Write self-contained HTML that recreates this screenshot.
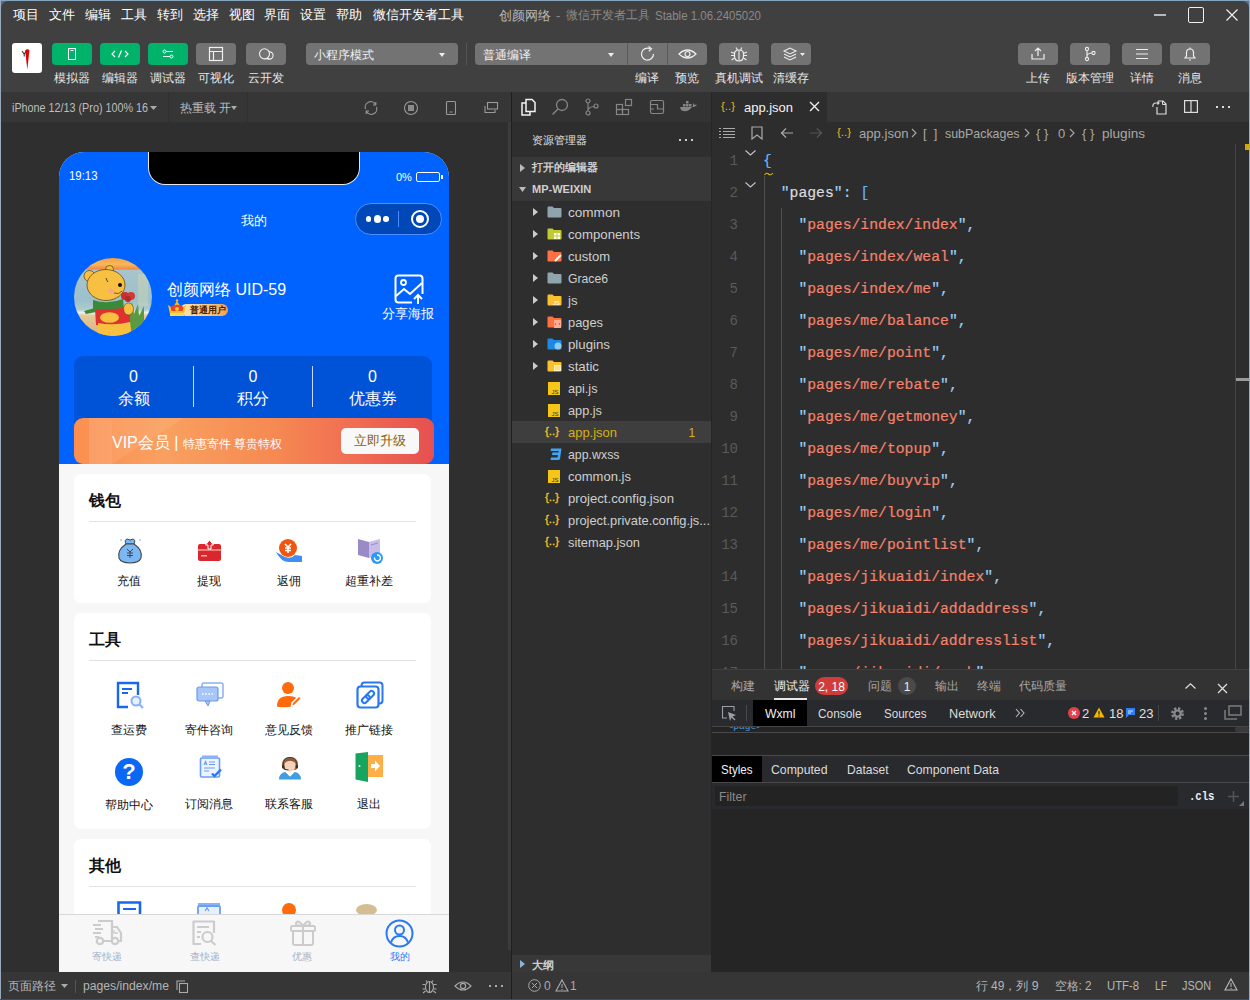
<!DOCTYPE html>
<html><head><meta charset="utf-8">
<style>
*{box-sizing:border-box;margin:0;padding:0}
html,body{width:1250px;height:1000px;overflow:hidden;background:#4d7399}
body{font-family:"Liberation Sans",sans-serif;position:relative}
.a{position:absolute}
.t{position:absolute;white-space:nowrap;line-height:1}
.m{font-family:"Liberation Mono",monospace}
svg{overflow:visible}
</style></head><body>

<div class="a" style="left:1px;top:1px;width:1248px;height:998px;background:#404040;border-radius:7px"></div>
<div class="a" style="left:0px;top:0px;width:1250px;height:1px;background:#86a6c0;"></div>
<div class="a" style="left:0px;top:0px;width:1px;height:1000px;background:#9aaabb;"></div>
<div class="a" style="left:0px;top:999px;width:1250px;height:1px;background:#2b4f8a;"></div>
<div class="t" style="left:13px;top:8.3px;font-size:13px;color:#ffffff;font-weight:normal;">项目</div>
<div class="t" style="left:49px;top:8.3px;font-size:13px;color:#ffffff;font-weight:normal;">文件</div>
<div class="t" style="left:85px;top:8.3px;font-size:13px;color:#ffffff;font-weight:normal;">编辑</div>
<div class="t" style="left:121px;top:8.3px;font-size:13px;color:#ffffff;font-weight:normal;">工具</div>
<div class="t" style="left:157px;top:8.3px;font-size:13px;color:#ffffff;font-weight:normal;">转到</div>
<div class="t" style="left:193px;top:8.3px;font-size:13px;color:#ffffff;font-weight:normal;">选择</div>
<div class="t" style="left:229px;top:8.3px;font-size:13px;color:#ffffff;font-weight:normal;">视图</div>
<div class="t" style="left:264px;top:8.3px;font-size:13px;color:#ffffff;font-weight:normal;">界面</div>
<div class="t" style="left:300px;top:8.3px;font-size:13px;color:#ffffff;font-weight:normal;">设置</div>
<div class="t" style="left:336px;top:8.3px;font-size:13px;color:#ffffff;font-weight:normal;">帮助</div>
<div class="t" style="left:373px;top:8.3px;font-size:13px;color:#ffffff;font-weight:normal;">微信开发者工具</div>
<div class="t" style="left:499px;top:9.0px;font-size:13px;color:#b8b8b8;font-weight:normal;">创颜网络</div>
<div class="t" style="left:556px;top:9.0px;font-size:13px;color:#8a8a8a;font-weight:normal;">-</div>
<div class="t" style="left:566px;top:9.3px;font-size:12.3px;color:#8a8a8a;font-weight:normal;">微信开发者工具</div>
<div class="t" id="tw0" style="left:654.5px;top:9.0px;font-size:13px;color:#8a8a8a;font-weight:normal;transform:scaleX(0.8833);transform-origin:0 50%;">Stable 1.06.2405020</div>
<div class="a" style="left:1154px;top:14px;width:12px;height:2px;background:#b8b8b8;"></div>
<div class="a" style="left:1188px;top:7px;width:16px;height:16px;background:transparent;border:1.5px solid #f0f0f0;border-radius:2px"></div>
<svg class="a" style="left:1226px;top:9px;" width="12" height="12" viewBox="0 0 12 12"><path d="M0.5 0.5L11.5 11.5M11.5 0.5L0.5 11.5" stroke="#f0f0f0" stroke-width="1.2"/></svg>
<div class="a" style="left:12px;top:43px;width:30px;height:30px;background:#fff;border-radius:3px"></div>
<svg class="a" style="left:12px;top:43px;" width="30" height="30" viewBox="0 0 30 30"><path d="M13.2 7.5 Q15 5.5 17.4 7 L16.5 16 L15.3 26.5 L14.2 17 Z" fill="#e00000"/><path d="M10 8 L12.2 11 L14 8.5 M12.2 11 V13.5" stroke="#333" stroke-width="1.1" fill="none"/></svg>
<div class="a" style="left:52px;top:43px;width:40px;height:22px;background:#00b26a;border-radius:4px"></div>
<svg class="a" style="left:52px;top:43px;" width="40" height="22" viewBox="0 0 40 22"><rect x="16.5" y="5.5" width="7" height="11" fill="none" stroke="#fff" stroke-width="1"/><rect x="18.5" y="7" width="3" height="1" fill="#fff"/></svg>
<div class="t" style="left:-78px;width:300px;text-align:center;top:71.5px;font-size:12px;color:#e6e6e6;font-weight:normal;">模拟器</div>
<div class="a" style="left:100px;top:43px;width:40px;height:22px;background:#00b26a;border-radius:4px"></div>
<svg class="a" style="left:100px;top:43px;" width="40" height="22" viewBox="0 0 40 22"><path d="M15 8 L12 11 L15 14 M25 8 L28 11 L25 14 M21.5 7.5 L18.5 14.5" stroke="#fff" stroke-width="1.2" fill="none"/></svg>
<div class="t" style="left:-30px;width:300px;text-align:center;top:71.5px;font-size:12px;color:#e6e6e6;font-weight:normal;">编辑器</div>
<div class="a" style="left:148px;top:43px;width:40px;height:22px;background:#00b26a;border-radius:4px"></div>
<svg class="a" style="left:148px;top:43px;" width="40" height="22" viewBox="0 0 40 22"><circle cx="16.5" cy="8.5" r="1.5" fill="none" stroke="#fff" stroke-width="1"/><circle cx="23.5" cy="13.5" r="1.5" fill="none" stroke="#fff" stroke-width="1"/><path d="M18 8.5H25M15 13.5H22" stroke="#fff" stroke-width="1"/></svg>
<div class="t" style="left:18px;width:300px;text-align:center;top:71.5px;font-size:12px;color:#e6e6e6;font-weight:normal;">调试器</div>
<div class="a" style="left:196px;top:43px;width:40px;height:22px;background:#737373;border-radius:4px"></div>
<svg class="a" style="left:196px;top:43px;" width="40" height="22" viewBox="0 0 40 22"><rect x="13.5" y="4.5" width="13" height="13" fill="none" stroke="#f0f0f0" stroke-width="1.2"/><path d="M13.5 8.5H26.5M17.5 8.5V17.5" stroke="#f0f0f0" stroke-width="1.2"/></svg>
<div class="t" style="left:66px;width:300px;text-align:center;top:71.5px;font-size:12px;color:#e6e6e6;font-weight:normal;">可视化</div>
<div class="a" style="left:246px;top:43px;width:40px;height:22px;background:#737373;border-radius:4px"></div>
<svg class="a" style="left:246px;top:43px;" width="40" height="22" viewBox="0 0 40 22"><circle cx="23.5" cy="12.5" r="3.6" fill="none" stroke="#f0f0f0" stroke-width="1.1"/><path d="M17.5 15.8 H23.5" stroke="#f0f0f0" stroke-width="1.1"/><circle cx="18.5" cy="10.8" r="5" fill="#737373" stroke="#f0f0f0" stroke-width="1.1"/></svg>
<div class="t" style="left:116px;width:300px;text-align:center;top:71.5px;font-size:12px;color:#e6e6e6;font-weight:normal;">云开发</div>
<div class="a" style="left:306px;top:43px;width:152px;height:22px;background:#737373;border-radius:4px"></div>
<div class="t" style="left:314px;top:49.4px;font-size:12.2px;color:#f0f0f0;font-weight:normal;">小程序模式</div>
<svg class="a" style="left:439px;top:53px;" width="6" height="4" viewBox="0 0 6 4"><path d="M0 0H6L3 4Z" fill="#eee"/></svg>
<div class="a" style="left:466px;top:43px;width:1px;height:22px;background:#555;"></div>
<div class="a" style="left:475px;top:43px;width:232px;height:22px;background:#737373;border-radius:4px"></div>
<div class="a" style="left:627px;top:43px;width:1px;height:22px;background:#5a5a5a;"></div>
<div class="a" style="left:667px;top:43px;width:1px;height:22px;background:#5a5a5a;"></div>
<div class="t" style="left:483px;top:49.4px;font-size:12.2px;color:#f0f0f0;font-weight:normal;">普通编译</div>
<svg class="a" style="left:608px;top:53px;" width="6" height="4" viewBox="0 0 6 4"><path d="M0 0H6L3 4Z" fill="#eee"/></svg>
<svg class="a" style="left:628px;top:43px;" width="40" height="22" viewBox="0 0 40 22"><path d="M25.5 11 A6 6 0 1 1 22 5.6" fill="none" stroke="#eee" stroke-width="1.2"/><path d="M20.5 3.5 L23.5 5.8 L20.8 8.2" fill="none" stroke="#eee" stroke-width="1.2"/></svg>
<svg class="a" style="left:668px;top:43px;" width="39" height="22" viewBox="0 0 39 22"><path d="M11 11 Q19.5 3 28 11 Q19.5 19 11 11Z" fill="none" stroke="#eee" stroke-width="1.2"/><circle cx="19.5" cy="11" r="2.5" fill="none" stroke="#eee" stroke-width="1.2"/></svg>
<div class="t" style="left:497px;width:300px;text-align:center;top:71.5px;font-size:12px;color:#e6e6e6;font-weight:normal;">编译</div>
<div class="t" style="left:537px;width:300px;text-align:center;top:71.5px;font-size:12px;color:#e6e6e6;font-weight:normal;">预览</div>
<div class="a" style="left:719px;top:43px;width:40px;height:22px;background:#737373;border-radius:4px"></div>
<svg class="a" style="left:719px;top:43px;" width="40" height="22" viewBox="0 0 40 22"><path d="M15.5 11 Q15.5 7 20 7 Q24.5 7 24.5 11 V13 Q24.5 18 20 18 Q15.5 18 15.5 13Z" fill="none" stroke="#eee" stroke-width="1.2"/><path d="M20 7.5V17.5M17 4.5L18.5 7M23 4.5L21.5 7M12 9L15.5 10.5M28 9L24.5 10.5M12 12.5H15.5M24.5 12.5H28M12.5 17L15.5 15M27.5 17L24.5 15" stroke="#eee" stroke-width="1.1"/></svg>
<div class="t" style="left:589px;width:300px;text-align:center;top:71.5px;font-size:12px;color:#e6e6e6;font-weight:normal;">真机调试</div>
<div class="a" style="left:771px;top:43px;width:40px;height:22px;background:#737373;border-radius:4px"></div>
<svg class="a" style="left:771px;top:43px;" width="40" height="22" viewBox="0 0 40 22"><path d="M13 8 L19 5 L25 8 L19 11Z M13 11 L19 14 L25 11 M13 14 L19 17 L25 14" fill="none" stroke="#eee" stroke-width="1.1"/><path d="M29 10H34L31.5 13Z" fill="#eee"/></svg>
<div class="t" style="left:641px;width:300px;text-align:center;top:71.5px;font-size:12px;color:#e6e6e6;font-weight:normal;">清缓存</div>
<div class="a" style="left:1018px;top:43px;width:40px;height:22px;background:#737373;border-radius:4px"></div>
<svg class="a" style="left:1018px;top:43px;" width="40" height="22" viewBox="0 0 40 22"><path d="M14 11V16H26V11M20 13V5M17 8L20 5L23 8" fill="none" stroke="#eee" stroke-width="1.2"/></svg>
<div class="t" style="left:888px;width:300px;text-align:center;top:71.5px;font-size:12px;color:#e6e6e6;font-weight:normal;">上传</div>
<div class="a" style="left:1070px;top:43px;width:40px;height:22px;background:#737373;border-radius:4px"></div>
<svg class="a" style="left:1070px;top:43px;" width="40" height="22" viewBox="0 0 40 22"><circle cx="17" cy="6" r="1.6" fill="none" stroke="#eee" stroke-width="1.1"/><circle cx="17" cy="16" r="1.6" fill="none" stroke="#eee" stroke-width="1.1"/><circle cx="23.5" cy="10" r="1.6" fill="none" stroke="#eee" stroke-width="1.1"/><path d="M17 7.6V14.4M17 13 Q17 10.5 22 10" fill="none" stroke="#eee" stroke-width="1.1"/></svg>
<div class="t" style="left:940px;width:300px;text-align:center;top:71.5px;font-size:12px;color:#e6e6e6;font-weight:normal;">版本管理</div>
<div class="a" style="left:1122px;top:43px;width:40px;height:22px;background:#737373;border-radius:4px"></div>
<svg class="a" style="left:1122px;top:43px;" width="40" height="22" viewBox="0 0 40 22"><path d="M14 6.5H26M14 11H26M14 15.5H26" stroke="#eee" stroke-width="1.2"/></svg>
<div class="t" style="left:992px;width:300px;text-align:center;top:71.5px;font-size:12px;color:#e6e6e6;font-weight:normal;">详情</div>
<div class="a" style="left:1170px;top:43px;width:40px;height:22px;background:#737373;border-radius:4px"></div>
<svg class="a" style="left:1170px;top:43px;" width="40" height="22" viewBox="0 0 40 22"><path d="M15 15H25 L23.5 13V9.5A3.5 3.5 0 0 0 16.5 9.5V13Z M19 17H21" fill="none" stroke="#eee" stroke-width="1.2"/><path d="M20 4.5V6" stroke="#eee" stroke-width="1.2"/></svg>
<div class="t" style="left:1040px;width:300px;text-align:center;top:71.5px;font-size:12px;color:#e6e6e6;font-weight:normal;">消息</div>
<div class="a" style="left:1px;top:92px;width:510px;height:30px;background:#363636;"></div>
<div class="a" style="left:1px;top:122px;width:510px;height:850px;background:#2f2f2f;"></div>
<div class="a" style="left:168px;top:92px;width:1px;height:30px;background:#303030;"></div>
<div class="a" style="left:247px;top:92px;width:1px;height:30px;background:#303030;"></div>
<div class="t" id="tw1" style="left:12px;top:101.5px;font-size:12px;color:#bdbdbd;font-weight:normal;transform:scaleX(0.8981);transform-origin:0 50%;">iPhone 12/13 (Pro) 100% 16</div>
<svg class="a" style="left:150px;top:106px;" width="7" height="4" viewBox="0 0 7 4"><path d="M0 0H7L3.5 4Z" fill="#aaa"/></svg>
<div class="t" style="left:180px;top:101.7px;font-size:11.7px;color:#bdbdbd;font-weight:normal;">热重载 开</div>
<svg class="a" style="left:231px;top:106px;" width="6" height="4" viewBox="0 0 6 4"><path d="M0 0H6L3 4Z" fill="#aaa"/></svg>
<svg class="a" style="left:363px;top:100px;" width="16" height="16" viewBox="0 0 16 16"><path d="M2.5 9 A5.5 5.5 0 0 1 12.5 4.5 M13.5 7 A5.5 5.5 0 0 1 3.5 11.5" fill="none" stroke="#9a9a9a" stroke-width="1.1"/><path d="M12.8 2V5H10M3.2 14V11H6" fill="none" stroke="#9a9a9a" stroke-width="1.1"/></svg>
<svg class="a" style="left:403px;top:100px;" width="16" height="16" viewBox="0 0 16 16"><circle cx="8" cy="8" r="6.5" fill="none" stroke="#9a9a9a" stroke-width="1.1"/><rect x="5" y="5" width="6" height="6" fill="#8a8a8a"/></svg>
<svg class="a" style="left:443px;top:100px;" width="16" height="16" viewBox="0 0 16 16"><rect x="3.5" y="1.5" width="9" height="13" rx="1" fill="none" stroke="#9a9a9a" stroke-width="1.1"/><path d="M6.5 12H9.5" stroke="#9a9a9a" stroke-width="1"/></svg>
<svg class="a" style="left:483px;top:100px;" width="16" height="16" viewBox="0 0 16 16"><rect x="4.5" y="2.5" width="10" height="6.5" fill="none" stroke="#9a9a9a" stroke-width="1.1"/><path d="M2 6V12.5H12V10" fill="none" stroke="#9a9a9a" stroke-width="1.1"/></svg>
<div class="a" style="left:508px;top:122px;width:3px;height:828px;background:#3c3c3c;"></div>
<div class="a" style="left:511px;top:92px;width:1px;height:907px;background:#1f1f1f;"></div>
<div class="a" style="left:1px;top:972px;width:510px;height:27px;background:#363636;"></div>
<div class="t" style="left:8px;top:980.0px;font-size:12px;color:#b5b5b5;font-weight:normal;">页面路径</div>
<svg class="a" style="left:61px;top:984px;" width="7" height="4" viewBox="0 0 7 4"><path d="M0 0H7L3.5 4Z" fill="#aaa"/></svg>
<div class="a" style="left:75px;top:980px;width:1px;height:13px;background:#555;"></div>
<div class="t" id="tw2" style="left:83px;top:980.0px;font-size:12px;color:#b5b5b5;font-weight:normal;transform:scaleX(1.0149);transform-origin:0 50%;">pages/index/me</div>
<svg class="a" style="left:176px;top:980px;" width="12" height="13" viewBox="0 0 12 13"><rect x="3.5" y="3.5" width="8" height="9" fill="none" stroke="#aaa" stroke-width="1.1"/><path d="M1 10V1H9" fill="none" stroke="#aaa" stroke-width="1.1"/></svg>
<svg class="a" style="left:421px;top:978px;" width="17" height="16" viewBox="0 0 17 16"><ellipse cx="8.5" cy="9" rx="4" ry="5.5" fill="none" stroke="#aaa" stroke-width="1.1"/><path d="M8.5 4V14.5M5 2.5L6.5 4.5M12 2.5L10.5 4.5M1.5 6.5H4.5M12.5 6.5H15.5M1.5 11H4.5M12.5 11H15.5M2 15L4.5 13M15 15L12.5 13" stroke="#aaa" stroke-width="1.1"/></svg>
<svg class="a" style="left:454px;top:979px;" width="18" height="14" viewBox="0 0 18 14"><path d="M1 7 Q9 -1 17 7 Q9 15 1 7Z" fill="none" stroke="#aaa" stroke-width="1.1"/><circle cx="9" cy="7" r="2.6" fill="none" stroke="#aaa" stroke-width="1.1"/></svg>
<div class="a" style="left:489px;top:985px;width:2px;height:2px;background:#aaa;"></div>
<div class="a" style="left:495px;top:985px;width:2px;height:2px;background:#aaa;"></div>
<div class="a" style="left:501px;top:985px;width:2px;height:2px;background:#aaa;"></div>
<div class="a" style="left:59px;top:152px;width:390px;height:820px;background:#f7f7f7;border-radius:25px 25px 0 0;overflow:hidden">
<div class="a" style="left:0px;top:0px;width:390px;height:312px;background:#0062ff;"></div>
<div class="a" style="left:89px;top:-12px;width:212px;height:45px;background:#000;border-radius:0 0 17px 17px;border:1px solid #e8e8e8;border-top:none"></div>
<div class="t" id="tw3" style="left:10px;top:17.5px;font-size:12px;color:#fff;font-weight:normal;transform:scaleX(0.9490);transform-origin:0 50%;">19:13</div>
<div class="t" style="left:337px;top:20.0px;font-size:11px;color:#fff;font-weight:normal;">0%</div>
<div class="a" style="left:357px;top:20px;width:24px;height:10px;background:transparent;border:1.2px solid #fff;border-radius:2px"></div>
<div class="a" style="left:382px;top:23px;width:2px;height:4px;background:#fff;"></div>
<div class="t" style="left:45px;width:300px;text-align:center;top:62.0px;font-size:13px;color:#fff;font-weight:normal;">我的</div>
<div class="a" style="left:296px;top:51px;width:87px;height:32px;background:#0047b8;border-radius:16px;border:1px solid #4d8dff"></div>
<div class="a" style="left:306.8px;top:64.3px;width:5.4px;height:5.4px;border-radius:50%;background:#fff"></div>
<div class="a" style="left:314.9px;top:63.4px;width:7.2px;height:7.2px;border-radius:50%;background:#fff"></div>
<div class="a" style="left:324.3px;top:64.3px;width:5.4px;height:5.4px;border-radius:50%;background:#fff"></div>
<div class="a" style="left:339px;top:59px;width:1px;height:16px;background:#4d8dff;"></div>
<div class="a" style="left:352px;top:58px;width:18px;height:18px;border-radius:50%;border:2.5px solid #fff"></div>
<div class="a" style="left:357px;top:63px;width:8px;height:8px;border-radius:50%;background:#fff"></div>
<div class="a" style="left:15px;top:106px;width:78px;height:78px;border-radius:50%;overflow:hidden;background:linear-gradient(#f5a040 0%,#f8b858 8%,#f28a48 14%,#a8c4cc 16%,#9cc0cc 55%,#b0cccc 66%,#e8f0f0 70%,#e8c898 74%,#d8b47e 100%)">
<svg width="78" height="78" viewBox="0 0 78 78" style="position:absolute;left:0;top:0">
<rect x="64" y="16" width="10" height="32" fill="#e8e0a0" opacity=".3"/>
<path d="M54 56 L58 44 L60 56 L64 46 L65 58 L70 48 L70 78 L54 78Z" fill="#5a9a40"/>
<circle cx="15.5" cy="18" r="5.5" fill="#f8c040" stroke="#5a3a10" stroke-width=".7"/>
<circle cx="35.5" cy="11.5" r="4" fill="#f8c040" stroke="#5a3a10" stroke-width=".7"/>
<ellipse cx="32" cy="27" rx="19" ry="15.5" fill="#f8c040" stroke="#5a3a10" stroke-width=".7"/>
<path d="M32 20 Q33 23 34 24" stroke="#333" stroke-width=".9" fill="none"/>
<circle cx="46" cy="27" r="2" fill="#111"/><circle cx="37" cy="33" r="2.6" fill="#f4a0a0" opacity=".8"/>
<path d="M40 35 Q45 37 48 33" stroke="#5a3a10" stroke-width=".8" fill="none"/>
<path d="M19 42 Q34 47 49 41 L50 51 Q34 55 19 51Z" fill="#3a8a3a"/>
<path d="M21 50 L10 53 L12 56 L22 54Z" fill="#3a8a3a"/>
<path d="M21 51 Q38 52 56 49 L56 67 Q38 70 22 67Z" fill="#e03030"/>
<ellipse cx="35.5" cy="59.5" rx="9.5" ry="5.2" fill="#f8c040"/>
<path d="M24 65 Q40 68 56 64 L58 78 L24 78Z" fill="#f8c040"/>
<ellipse cx="54.5" cy="51" rx="5" ry="6" fill="#f8c040" stroke="#5a3a10" stroke-width=".5"/>
<circle cx="51" cy="38" r="4" fill="#c83030"/><circle cx="57" cy="38" r="4" fill="#d03a30"/><circle cx="54" cy="41" r="3" fill="#b82828"/>
</svg></div>
<div class="t" style="left:108px;top:129.5px;font-size:16px;color:#fff;font-weight:normal;">创颜网络 UID-59</div>
<div class="a" style="left:121px;top:152px;width:48px;height:12px;border-radius:6px;background:linear-gradient(90deg,#ffe2b0,#f8c888 60%,#f0a050)"></div>
<div class="t" style="left:130.5px;top:154.0px;font-size:9px;color:#4a2000;font-weight:bold;">普通用户</div>
<svg class="a" style="left:108px;top:146px;" width="20" height="19" viewBox="0 0 20 19"><path d="M1 7 L5.5 10 L10 3 L14.5 10 L19 7 L17 16 L3 16Z" fill="#f7c028"/><path d="M3.5 9 Q10 4.5 16.5 9 L15.5 13 L4.5 13Z" fill="#e8442a"/><circle cx="10" cy="11" r="2" fill="#f7c028"/><circle cx="10" cy="2.5" r="1.2" fill="#f7c028"/><rect x="3" y="15" width="14" height="3" fill="#f8d858"/></svg>
<svg class="a" style="left:335px;top:122px;" width="30" height="30" viewBox="0 0 30 30"><rect x="1.5" y="1.5" width="27" height="27" rx="3" fill="none" stroke="#fff" stroke-width="2"/><circle cx="9.5" cy="8.5" r="2.5" fill="none" stroke="#fff" stroke-width="1.8"/><path d="M2 22 L10 15 L16 20 L28 9" fill="none" stroke="#fff" stroke-width="2"/><rect x="18" y="20" width="13" height="11" fill="#0062ff"/><path d="M24 30V21M20 25L24 21L28 25" fill="none" stroke="#fff" stroke-width="2"/></svg>
<div class="t" style="left:199px;width:300px;text-align:center;top:155.0px;font-size:13px;color:#fff;font-weight:normal;">分享海报</div>
<div class="a" style="left:15px;top:204px;width:358px;height:70px;background:#0052d6;border-radius:9px 9px 0 0"></div>
<div class="t" style="left:-75.5px;width:300px;text-align:center;top:217.0px;font-size:16px;color:#fff;font-weight:normal;">0</div>
<div class="t" style="left:-75.5px;width:300px;text-align:center;top:238.5px;font-size:16px;color:#fff;font-weight:normal;">余额</div>
<div class="t" style="left:44px;width:300px;text-align:center;top:217.0px;font-size:16px;color:#fff;font-weight:normal;">0</div>
<div class="t" style="left:44px;width:300px;text-align:center;top:238.5px;font-size:16px;color:#fff;font-weight:normal;">积分</div>
<div class="t" style="left:163.5px;width:300px;text-align:center;top:217.0px;font-size:16px;color:#fff;font-weight:normal;">0</div>
<div class="t" style="left:163.5px;width:300px;text-align:center;top:238.5px;font-size:16px;color:#fff;font-weight:normal;">优惠券</div>
<div class="a" style="left:134px;top:214px;width:1px;height:41px;background:#c8d8ff;"></div>
<div class="a" style="left:253px;top:214px;width:1px;height:41px;background:#c8d8ff;"></div>
<div class="a" style="left:15px;top:266px;width:360px;height:46px;border-radius:9px;background:linear-gradient(90deg,#fb8e4f 0%,#f9a060 25%,#f68a52 55%,#f06d52 78%,#e65050 100%);overflow:hidden"><svg width="360" height="46" style="position:absolute;left:0;top:0"><path d="M15 0H110L38 46H15Z" fill="#fff" opacity=".08"/><rect x="15" y="0" width="23" height="46" fill="#fff" opacity=".05"/></svg></div>
<div class="t" style="left:53px;top:282.5px;font-size:16px;color:#fff;font-weight:normal;">VIP会员 | <span style="font-size:12px">特惠寄件 尊贵特权</span></div>
<div class="a" style="left:282px;top:276px;width:78px;height:26px;background:#f8f8f8;border-radius:5px"></div>
<div class="t" style="left:171px;width:300px;text-align:center;top:282.8px;font-size:12.5px;color:#8a5c10;font-weight:normal;">立即升级</div>
<div class="a" style="left:15px;top:322px;width:357px;height:129px;background:#fff;border-radius:7px"></div>
<div class="t" style="left:30px;top:340.5px;font-size:16px;color:#111;font-weight:bold;">钱包</div>
<div class="a" style="left:30px;top:369px;width:327px;height:1px;background:#e2e2e2;"></div>
<div class="a" style="left:15px;top:461px;width:357px;height:216px;background:#fff;border-radius:7px"></div>
<div class="t" style="left:30px;top:479.5px;font-size:16px;color:#111;font-weight:bold;">工具</div>
<div class="a" style="left:30px;top:508px;width:327px;height:1px;background:#e2e2e2;"></div>
<div class="a" style="left:15px;top:687px;width:357px;height:200px;background:#fff;border-radius:7px"></div>
<div class="t" style="left:30px;top:705.5px;font-size:16px;color:#111;font-weight:bold;">其他</div>
<div class="a" style="left:30px;top:734px;width:327px;height:1px;background:#e2e2e2;"></div>
<svg class="a" style="left:57px;top:385px;" width="28" height="28" viewBox="0 0 28 28"><path d="M10 7 Q8 3 11 2 Q14 4 17 2 Q20 3 18 7Z" fill="#7ab8f5" stroke="#444" stroke-width="1"/><path d="M10 7 Q1 13 3 21 Q5 26 14 26 Q23 26 25 21 Q27 13 18 7Z" fill="#7ab8f5" stroke="#444" stroke-width="1.1"/><path d="M11 12L14 15L17 12M14 15V21M11 16H17M11 18.5H17" stroke="#445" stroke-width="1" fill="none"/><path d="M4 3H6M23 3H25" stroke="#8ac" stroke-width="1"/></svg>
<div class="t" style="left:-80px;width:300px;text-align:center;top:422.5px;font-size:12px;color:#111;font-weight:normal;">充值</div>
<svg class="a" style="left:138px;top:386px;" width="26" height="26" viewBox="0 0 26 26"><rect x="1" y="6" width="23" height="17" rx="2" fill="#d8282e"/><rect x="1" y="11" width="23" height="2" fill="#f08080"/><rect x="4" y="17" width="6" height="1.5" fill="#f8b0b0"/><path d="M8.5 7L12.5 2L16.5 7H14V11H11V7Z" fill="#d8282e" stroke="#fff" stroke-width="1"/></svg>
<div class="t" style="left:0px;width:300px;text-align:center;top:422.5px;font-size:12px;color:#111;font-weight:normal;">提现</div>
<svg class="a" style="left:216px;top:386px;" width="28" height="26" viewBox="0 0 28 26"><circle cx="13" cy="10" r="9" fill="#f2560e"/><path d="M10 6L13 9L16 6M13 9V15M10 10H16M10 12.5H16" stroke="#fff" stroke-width="1.6" fill="none"/><path d="M1 14 Q6 24 14 24 L27 24 L27 18 L20 17 Q17 21 10 19 Z" fill="#3d8ef5"/></svg>
<div class="t" style="left:80px;width:300px;text-align:center;top:422.5px;font-size:12px;color:#111;font-weight:normal;">返佣</div>
<svg class="a" style="left:297px;top:386px;" width="28" height="27" viewBox="0 0 28 27"><path d="M2 1 L13 4 L13 20 L2 17Z" fill="#9a8ac6"/><path d="M13 4 L24 1 L24 17 L13 20Z" fill="#c8bde8"/><path d="M15 7L22 5" stroke="#9a8ac6" stroke-width="1"/><circle cx="21" cy="20" r="6" fill="#2a9af5"/><path d="M18.5 19.5 A3 3 0 1 0 21 17" stroke="#fff" stroke-width="1.4" fill="none"/></svg>
<div class="t" style="left:160px;width:300px;text-align:center;top:422.5px;font-size:12px;color:#111;font-weight:normal;">超重补差</div>
<svg class="a" style="left:57px;top:529px;" width="28" height="28" viewBox="0 0 28 28"><path d="M22 14V2H2V26H12" fill="none" stroke="#1868ee" stroke-width="2.4"/><path d="M6 8H16M6 12H12" stroke="#1868ee" stroke-width="2"/><circle cx="20" cy="20" r="4.5" fill="#e8f0ff" stroke="#8ab0f5" stroke-width="2"/><path d="M23 23L27 27" stroke="#8ab0f5" stroke-width="2.2"/></svg>
<div class="t" style="left:-80px;width:300px;text-align:center;top:571.5px;font-size:12px;color:#111;font-weight:normal;">查运费</div>
<svg class="a" style="left:137px;top:530px;" width="28" height="26" viewBox="0 0 28 26"><rect x="6" y="1" width="21" height="15" rx="2" fill="#fff" stroke="#8ab0f0" stroke-width="1.5"/><rect x="1" y="5" width="21" height="14" rx="2" fill="#a8c6f8" stroke="#6a9af0" stroke-width="1.2"/><path d="M9 19 L12 24 L14 19Z" fill="#a8c6f8" stroke="#6a9af0" stroke-width="1"/><path d="M6 12H17" stroke="#fff" stroke-width="1.4" stroke-dasharray="1.6 1.6"/></svg>
<div class="t" style="left:0px;width:300px;text-align:center;top:571.5px;font-size:12px;color:#111;font-weight:normal;">寄件咨询</div>
<svg class="a" style="left:217px;top:529px;" width="27" height="28" viewBox="0 0 27 28"><circle cx="12" cy="7" r="6" fill="#ff6a0a"/><path d="M1 25 Q1 15 12 15 Q19 15 21.5 18 L16 25.5 Q12 26.5 3 26 Q1 26 1 25Z" fill="#ff6a0a"/><path d="M14.5 26 L15.5 21.5 L23 14 L26.5 17.5 L19 25Z" fill="#fff"/><path d="M16.5 24.5 L17 22 L23 16 L24.5 17.5 L18.5 23.5Z" fill="#ff6a0a"/></svg>
<div class="t" style="left:80px;width:300px;text-align:center;top:571.5px;font-size:12px;color:#111;font-weight:normal;">意见反馈</div>
<svg class="a" style="left:297px;top:529px;" width="28" height="28" viewBox="0 0 28 28"><rect x="5.5" y="1.5" width="21" height="21" rx="3" fill="#fff" stroke="#2a78f0" stroke-width="2"/><rect x="1.5" y="5.5" width="21" height="21" rx="3" fill="#fff" stroke="#2a78f0" stroke-width="2.2"/><g transform="rotate(-45 12 16)"><rect x="4.5" y="13.5" width="9" height="5" rx="2.5" fill="none" stroke="#2a78f0" stroke-width="2"/><rect x="10.5" y="13.5" width="9" height="5" rx="2.5" fill="none" stroke="#2a78f0" stroke-width="2"/></g></svg>
<div class="t" style="left:160px;width:300px;text-align:center;top:571.5px;font-size:12px;color:#111;font-weight:normal;">推广链接</div>
<div class="a" style="left:56px;top:606px;width:28px;height:28px;border-radius:50%;background:#0a68f5"></div>
<div class="t" style="left:-80px;width:300px;text-align:center;top:609.0px;font-size:22px;color:#fff;font-weight:normal;font-weight:bold"><b>?</b></div>
<div class="t" style="left:-80px;width:300px;text-align:center;top:647.0px;font-size:12px;color:#111;font-weight:normal;">帮助中心</div>
<svg class="a" style="left:140px;top:603px;" width="24" height="24" viewBox="0 0 24 24"><rect x="3" y="0.5" width="16" height="1.6" fill="#8ab2f5"/><rect x="1.5" y="3" width="19" height="19" rx="1.2" fill="#eef4ff" stroke="#6a9ef5" stroke-width="1.6"/><path d="M5 10L6.5 6.5L8 10M5.5 9H7.5M10 7H16M10 9.5H16M5 13H16M5 16H10" stroke="#6a9ef5" stroke-width="1.1" fill="none"/><path d="M13 18.5 L15.5 21 L22 14.5" stroke="#2a78f0" stroke-width="2.4" fill="none"/></svg>
<div class="t" style="left:0px;width:300px;text-align:center;top:645.5px;font-size:12px;color:#111;font-weight:normal;">订阅消息</div>
<svg class="a" style="left:219px;top:603px;" width="24" height="25" viewBox="0 0 24 25"><path d="M4 12 Q3 2 12 2 Q21 2 20 12 L18 15 L6 15Z" fill="#a8744e"/><ellipse cx="12" cy="10.5" rx="5.5" ry="6" fill="#f4d2b8"/><path d="M6.5 8 Q12 3.5 17.5 8 Q17 4 12 3.5 Q7 4 6.5 8Z" fill="#8a5434"/><path d="M1 24.5 Q1 18 7.5 17 L12 21.5 L16.5 17 Q23 18 23 24.5Z" fill="#3f9ee2"/><path d="M7.5 17 L12 21.5 L16.5 17 L15 16 L12 18 L9 16Z" fill="#fff"/><path d="M5 11 Q5 2.5 12 2.5 Q19 2.5 19 11" fill="none" stroke="#333" stroke-width="1"/><path d="M5.5 12 Q6 15.5 10.5 15" fill="none" stroke="#333" stroke-width="1"/><rect x="4" y="10" width="2.4" height="3.5" rx="1" fill="#333"/><rect x="17.6" y="10" width="2.4" height="3.5" rx="1" fill="#333"/></svg>
<div class="t" style="left:80px;width:300px;text-align:center;top:645.5px;font-size:12px;color:#111;font-weight:normal;">联系客服</div>
<svg class="a" style="left:296px;top:600px;" width="28" height="30" viewBox="0 0 28 30"><rect x="13" y="3" width="15" height="22" fill="#ffae48"/><path d="M0.5 1.5 L13 0 L13 30 L0.5 27.5Z" fill="#17a45e"/><circle cx="4.5" cy="14" r="1" fill="#fff"/><path d="M16 12H20V8.5L25 14L20 19.5V16H16Z" fill="#fff"/></svg>
<div class="t" style="left:160px;width:300px;text-align:center;top:645.5px;font-size:12px;color:#111;font-weight:normal;">退出</div>
<svg class="a" style="left:58px;top:749px;" width="26" height="14" viewBox="0 0 26 14"><path d="M1.5 14V1.5H23V14" fill="none" stroke="#1868ee" stroke-width="2.6"/><path d="M6 8H19" stroke="#1868ee" stroke-width="2"/></svg>
<svg class="a" style="left:138px;top:751px;" width="24" height="12" viewBox="0 0 24 12"><rect x="1" y="0" width="22" height="2" fill="#8ab2f5"/><rect x="1" y="3" width="22" height="12" rx="1" fill="#e8f0fe" stroke="#6a9ef5" stroke-width="1.8"/><path d="M8 8 L10 5 L12 8" stroke="#6a9ef5" stroke-width="1.3" fill="none"/></svg>
<div class="a" style="left:223px;top:751px;width:14px;height:14px;border-radius:50%;background:#ff6a0a"></div>
<div class="a" style="left:297px;top:752px;width:21px;height:12px;border-radius:50%;background:#d4bd92"></div>
<div class="a" style="left:0px;top:762px;width:390px;height:58px;background:#f7f7f7;border-top:1px solid #d8d8d8"></div>
<svg class="a" style="left:34px;top:767px;" width="30" height="27" viewBox="0 0 30 27"><path d="M5 2H19V22H9" fill="none" stroke="#ccc" stroke-width="2.2"/><path d="M19 8H24L28 14V22H25" fill="none" stroke="#ccc" stroke-width="2.2"/><circle cx="7" cy="22" r="3.2" fill="#f7f7f7" stroke="#ccc" stroke-width="2.2"/><circle cx="22" cy="22" r="3.2" fill="#f7f7f7" stroke="#ccc" stroke-width="2.2"/><path d="M0 6H8M2 10H10M0 14H8M2 18H6" stroke="#ccc" stroke-width="2"/><path d="M21 11V14H25" fill="none" stroke="#ccc" stroke-width="1.4"/></svg>
<div class="t" style="left:-102px;width:300px;text-align:center;top:799.5px;font-size:10px;color:#a2b2c8;font-weight:normal;">寄快递</div>
<svg class="a" style="left:133px;top:768px;" width="26" height="26" viewBox="0 0 26 26"><path d="M22 13V1.5H1.5V24H9" fill="none" stroke="#ccc" stroke-width="2.2" stroke-linejoin="round"/><path d="M5 7H17M5 12H9M5 17H8" stroke="#ccc" stroke-width="2"/><circle cx="15.5" cy="17" r="5" fill="none" stroke="#ccc" stroke-width="2.2"/><path d="M19 21L23.5 25" stroke="#ccc" stroke-width="2.2"/></svg>
<div class="t" style="left:-4.5px;width:300px;text-align:center;top:799.5px;font-size:10px;color:#a2b2c8;font-weight:normal;">查快递</div>
<svg class="a" style="left:231px;top:768px;" width="26" height="26" viewBox="0 0 26 26"><rect x="1" y="6" width="24" height="5" rx="1.5" fill="none" stroke="#ccc" stroke-width="2"/><path d="M3 11V23Q3 25 5 25H21Q23 25 23 23V11M13 6V25" fill="none" stroke="#ccc" stroke-width="2"/><path d="M13 6 Q8 -1 6 3 Q5 6 13 6 Q21 6 20 3 Q18 -1 13 6Z" fill="none" stroke="#ccc" stroke-width="2"/></svg>
<div class="t" style="left:93px;width:300px;text-align:center;top:799.5px;font-size:10px;color:#a2b2c8;font-weight:normal;">优惠</div>
<svg class="a" style="left:326px;top:767px;" width="29" height="29" viewBox="0 0 29 29"><circle cx="14.5" cy="14.5" r="13" fill="none" stroke="#2a7af2" stroke-width="2"/><circle cx="14.5" cy="11" r="4.5" fill="none" stroke="#2a7af2" stroke-width="2"/><path d="M6 23.5 Q8 17 14.5 17 Q21 17 23 23.5" fill="none" stroke="#2a7af2" stroke-width="2"/></svg>
<div class="t" style="left:190.5px;width:300px;text-align:center;top:799.5px;font-size:10px;color:#2a7af2;font-weight:normal;">我的</div>
</div>
<div class="a" style="left:512px;top:92px;width:199px;height:30px;background:#333333;"></div>
<div class="a" style="left:512px;top:122px;width:199px;height:850px;background:#2e2e2e;"></div>
<div class="a" style="left:711px;top:92px;width:1px;height:880px;background:#262626;"></div>
<svg class="a" style="left:519px;top:98px;" width="18" height="18" viewBox="0 0 18 18"><path d="M7 1.5H13L16 4.5V13.5H7Z" fill="none" stroke="#f2f2f2" stroke-width="1.5"/><path d="M7 5H3V17H11V13.5" fill="none" stroke="#f2f2f2" stroke-width="1.5"/></svg>
<svg class="a" style="left:551px;top:98px;" width="18" height="18" viewBox="0 0 18 18"><circle cx="11" cy="7" r="5.5" fill="none" stroke="#868686" stroke-width="1.3"/><path d="M7 11L1.5 16.5" stroke="#868686" stroke-width="1.5"/></svg>
<svg class="a" style="left:584px;top:98px;" width="16" height="18" viewBox="0 0 16 18"><circle cx="4" cy="3" r="2" fill="none" stroke="#868686" stroke-width="1.2"/><circle cx="4" cy="15" r="2" fill="none" stroke="#868686" stroke-width="1.2"/><circle cx="12" cy="8" r="2" fill="none" stroke="#868686" stroke-width="1.2"/><path d="M4 5V13M4 12Q5 9 10 8.5" fill="none" stroke="#868686" stroke-width="1.2"/></svg>
<svg class="a" style="left:615px;top:98px;" width="18" height="18" viewBox="0 0 18 18"><rect x="1.5" y="6.5" width="6" height="5" fill="none" stroke="#868686" stroke-width="1.2"/><rect x="1.5" y="11.5" width="6" height="5" fill="none" stroke="#868686" stroke-width="1.2"/><rect x="7.5" y="11.5" width="6" height="5" fill="none" stroke="#868686" stroke-width="1.2"/><rect x="10.5" y="1.5" width="6" height="6" fill="none" stroke="#868686" stroke-width="1.2"/></svg>
<svg class="a" style="left:649px;top:99px;" width="16" height="16" viewBox="0 0 16 16"><rect x="1.5" y="1.5" width="13" height="13" rx="1.5" fill="none" stroke="#868686" stroke-width="1.2"/><path d="M1.5 5.5H8.5V10H14.5M1.5 10H5" fill="none" stroke="#868686" stroke-width="1.2"/></svg>
<svg class="a" style="left:679px;top:100px;" width="18" height="14" viewBox="0 0 18 14"><path d="M1 7H15Q17 6 18 5Q17 4 15.5 5Q15 3 14 3.5V6Q8 14 2 10Z" fill="#868686"/><rect x="4" y="4" width="2.5" height="2.5" fill="#868686"/><rect x="7" y="4" width="2.5" height="2.5" fill="#868686"/><rect x="10" y="4" width="2.5" height="2.5" fill="#868686"/><rect x="7" y="1" width="2.5" height="2.5" fill="#868686"/></svg>
<div class="t" style="left:532px;top:134.5px;font-size:11px;color:#e0e0e0;font-weight:normal;">资源管理器</div>
<div class="a" style="left:679px;top:139px;width:2px;height:2px;background:#ccc;"></div>
<div class="a" style="left:685px;top:139px;width:2px;height:2px;background:#ccc;"></div>
<div class="a" style="left:691px;top:139px;width:2px;height:2px;background:#ccc;"></div>
<div class="a" style="left:512px;top:157px;width:199px;height:44px;background:#383838;"></div>
<svg class="a" style="left:520px;top:164px;" width="5" height="8" viewBox="0 0 5 8"><path d="M0 0L5 4L0 8Z" fill="#bbb"/></svg>
<div class="t" style="left:532px;top:162.0px;font-size:11px;color:#cfcfcf;font-weight:bold;">打开的编辑器</div>
<svg class="a" style="left:519px;top:187px;" width="7" height="5" viewBox="0 0 7 5"><path d="M0 0H7L3.5 5Z" fill="#bbb"/></svg>
<div class="t" style="left:532px;top:184.0px;font-size:11px;color:#cfcfcf;font-weight:bold;">MP-WEIXIN</div>
<svg class="a" style="left:533px;top:208px;" width="5" height="8" viewBox="0 0 5 8"><path d="M0 0L5 4L0 8Z" fill="#c8ccd0"/></svg>
<svg class="a" style="left:547px;top:206px;" width="15" height="12" viewBox="0 0 15 12"><path d="M0.5 1.5Q0.5 0.5 1.5 0.5H5.5L7 2H13.5Q14.5 2 14.5 3V10.5Q14.5 11.5 13.5 11.5H1.5Q0.5 11.5 0.5 10.5Z" fill="#90a4ae"/></svg>
<div class="t" id="tw4" style="left:568px;top:206.0px;font-size:13px;color:#cfcfcf;font-weight:normal;transform:scaleX(1.0429);transform-origin:0 50%;">common</div>
<svg class="a" style="left:533px;top:230px;" width="5" height="8" viewBox="0 0 5 8"><path d="M0 0L5 4L0 8Z" fill="#c8ccd0"/></svg>
<svg class="a" style="left:547px;top:228px;" width="15" height="12" viewBox="0 0 15 12"><path d="M0.5 1.5Q0.5 0.5 1.5 0.5H5.5L7 2H13.5Q14.5 2 14.5 3V10.5Q14.5 11.5 13.5 11.5H1.5Q0.5 11.5 0.5 10.5Z" fill="#c0ca33"/><rect x="7" y="5" width="2.5" height="2.5" fill="#fff"/><rect x="10.5" y="5" width="2.5" height="2.5" fill="#fff"/><rect x="7" y="8.5" width="2.5" height="2.5" fill="#fff"/><rect x="10.5" y="8.5" width="2.5" height="2.5" fill="#fff"/></svg>
<div class="t" id="tw5" style="left:568px;top:228.0px;font-size:13px;color:#cfcfcf;font-weight:normal;transform:scaleX(1.0165);transform-origin:0 50%;">components</div>
<svg class="a" style="left:533px;top:252px;" width="5" height="8" viewBox="0 0 5 8"><path d="M0 0L5 4L0 8Z" fill="#c8ccd0"/></svg>
<svg class="a" style="left:547px;top:250px;" width="15" height="12" viewBox="0 0 15 12"><path d="M0.5 1.5Q0.5 0.5 1.5 0.5H5.5L7 2H13.5Q14.5 2 14.5 3V10.5Q14.5 11.5 13.5 11.5H1.5Q0.5 11.5 0.5 10.5Z" fill="#ff7043"/><path d="M8 11L14 5" stroke="#fff" stroke-width="1.8"/></svg>
<div class="t" id="tw6" style="left:568px;top:250.0px;font-size:13px;color:#cfcfcf;font-weight:normal;transform:scaleX(1.0022);transform-origin:0 50%;">custom</div>
<svg class="a" style="left:533px;top:274px;" width="5" height="8" viewBox="0 0 5 8"><path d="M0 0L5 4L0 8Z" fill="#c8ccd0"/></svg>
<svg class="a" style="left:547px;top:272px;" width="15" height="12" viewBox="0 0 15 12"><path d="M0.5 1.5Q0.5 0.5 1.5 0.5H5.5L7 2H13.5Q14.5 2 14.5 3V10.5Q14.5 11.5 13.5 11.5H1.5Q0.5 11.5 0.5 10.5Z" fill="#90a4ae"/></svg>
<div class="t" id="tw7" style="left:568px;top:272.0px;font-size:13px;color:#cfcfcf;font-weight:normal;transform:scaleX(0.9381);transform-origin:0 50%;">Grace6</div>
<svg class="a" style="left:533px;top:296px;" width="5" height="8" viewBox="0 0 5 8"><path d="M0 0L5 4L0 8Z" fill="#c8ccd0"/></svg>
<svg class="a" style="left:547px;top:294px;" width="15" height="12" viewBox="0 0 15 12"><path d="M0.5 1.5Q0.5 0.5 1.5 0.5H5.5L7 2H13.5Q14.5 2 14.5 3V10.5Q14.5 11.5 13.5 11.5H1.5Q0.5 11.5 0.5 10.5Z" fill="#fbc02d"/><text x="6" y="11" font-size="6" font-family="Liberation Sans" fill="#fff">JS</text></svg>
<div class="t" id="tw8" style="left:568px;top:294.0px;font-size:13px;color:#cfcfcf;font-weight:normal;transform:scaleX(1.0116);transform-origin:0 50%;">js</div>
<svg class="a" style="left:533px;top:318px;" width="5" height="8" viewBox="0 0 5 8"><path d="M0 0L5 4L0 8Z" fill="#c8ccd0"/></svg>
<svg class="a" style="left:547px;top:316px;" width="15" height="12" viewBox="0 0 15 12"><path d="M0.5 1.5Q0.5 0.5 1.5 0.5H5.5L7 2H13.5Q14.5 2 14.5 3V10.5Q14.5 11.5 13.5 11.5H1.5Q0.5 11.5 0.5 10.5Z" fill="#ff7043"/><rect x="7" y="4" width="7" height="8" fill="#ffab91"/><path d="M9 7L8 8L9 9M12 7L13 8L12 9" stroke="#e64a19" stroke-width=".8" fill="none"/></svg>
<div class="t" id="tw9" style="left:568px;top:316.0px;font-size:13px;color:#cfcfcf;font-weight:normal;transform:scaleX(0.9881);transform-origin:0 50%;">pages</div>
<svg class="a" style="left:533px;top:340px;" width="5" height="8" viewBox="0 0 5 8"><path d="M0 0L5 4L0 8Z" fill="#c8ccd0"/></svg>
<svg class="a" style="left:547px;top:338px;" width="15" height="12" viewBox="0 0 15 12"><path d="M0.5 1.5Q0.5 0.5 1.5 0.5H5.5L7 2H13.5Q14.5 2 14.5 3V10.5Q14.5 11.5 13.5 11.5H1.5Q0.5 11.5 0.5 10.5Z" fill="#1e88e5"/><circle cx="11" cy="8" r="3.5" fill="#90caf9"/></svg>
<div class="t" id="tw10" style="left:568px;top:338.0px;font-size:13px;color:#cfcfcf;font-weight:normal;transform:scaleX(1.0193);transform-origin:0 50%;">plugins</div>
<svg class="a" style="left:533px;top:362px;" width="5" height="8" viewBox="0 0 5 8"><path d="M0 0L5 4L0 8Z" fill="#c8ccd0"/></svg>
<svg class="a" style="left:547px;top:360px;" width="15" height="12" viewBox="0 0 15 12"><path d="M0.5 1.5Q0.5 0.5 1.5 0.5H5.5L7 2H13.5Q14.5 2 14.5 3V10.5Q14.5 11.5 13.5 11.5H1.5Q0.5 11.5 0.5 10.5Z" fill="#fbc02d"/><rect x="7" y="5" width="7" height="6" fill="#fff3c4"/><path d="M8 7H13M8 9H13" stroke="#fbc02d" stroke-width=".8"/></svg>
<div class="t" id="tw11" style="left:568px;top:360.0px;font-size:13px;color:#cfcfcf;font-weight:normal;transform:scaleX(1.0216);transform-origin:0 50%;">static</div>
<svg class="a" style="left:548px;top:382px;" width="12" height="13" viewBox="0 0 12 13"><rect x="0" y="0" width="12" height="13" fill="#f5c518"/><text x="3.5" y="11.5" font-size="6" font-family="Liberation Sans" fill="#333">JS</text></svg>
<div class="t" id="tw12" style="left:568px;top:382.0px;font-size:13px;color:#cfcfcf;font-weight:normal;transform:scaleX(0.9717);transform-origin:0 50%;">api.js</div>
<svg class="a" style="left:548px;top:404px;" width="12" height="13" viewBox="0 0 12 13"><rect x="0" y="0" width="12" height="13" fill="#f5c518"/><text x="3.5" y="11.5" font-size="6" font-family="Liberation Sans" fill="#333">JS</text></svg>
<div class="t" id="tw13" style="left:568px;top:404.0px;font-size:13px;color:#cfcfcf;font-weight:normal;transform:scaleX(0.9797);transform-origin:0 50%;">app.js</div>
<div class="a" style="left:512px;top:421px;width:199px;height:22px;background:#3e3e3e;"></div>
<div class="t" style="left:688.5px;top:426.5px;font-size:12px;color:#d8b010;font-weight:normal;">1</div>
<div class="t" style="left:545px;top:426.2px;font-size:11.5px;color:#f0c030;font-weight:normal;-webkit-text-stroke:0.35px #f0c030;">{..}</div>
<div class="t" id="tw14" style="left:568px;top:426.0px;font-size:13px;color:#d8b010;font-weight:normal;transform:scaleX(0.9968);transform-origin:0 50%;">app.json</div>
<svg class="a" style="left:548px;top:447px;" width="14" height="14" viewBox="0 0 14 14"><path d="M3 1.5H13.5L12 12Q11.5 13 10 13H2.5L3 10.5H9.5L10 8H4L4.4 5.5H10.4L10.8 4H2.6Z" fill="#42a5f5"/></svg>
<div class="t" id="tw15" style="left:568px;top:448.0px;font-size:13px;color:#cfcfcf;font-weight:normal;transform:scaleX(0.9501);transform-origin:0 50%;">app.wxss</div>
<svg class="a" style="left:548px;top:470px;" width="12" height="13" viewBox="0 0 12 13"><rect x="0" y="0" width="12" height="13" fill="#f5c518"/><text x="3.5" y="11.5" font-size="6" font-family="Liberation Sans" fill="#333">JS</text></svg>
<div class="t" id="tw16" style="left:568px;top:470.0px;font-size:13px;color:#cfcfcf;font-weight:normal;transform:scaleX(1.0022);transform-origin:0 50%;">common.js</div>
<div class="t" style="left:545px;top:492.2px;font-size:11.5px;color:#f0c030;font-weight:normal;-webkit-text-stroke:0.35px #f0c030;">{..}</div>
<div class="t" id="tw17" style="left:568px;top:492.0px;font-size:13px;color:#cfcfcf;font-weight:normal;transform:scaleX(1.0116);transform-origin:0 50%;">project.config.json</div>
<div class="t" style="left:545px;top:514.2px;font-size:11.5px;color:#f0c030;font-weight:normal;-webkit-text-stroke:0.35px #f0c030;">{..}</div>
<div class="t" id="tw18" style="left:568px;top:514.0px;font-size:13px;color:#cfcfcf;font-weight:normal;transform:scaleX(0.9875);transform-origin:0 50%;">project.private.config.js...</div>
<div class="t" style="left:545px;top:536.2px;font-size:11.5px;color:#f0c030;font-weight:normal;-webkit-text-stroke:0.35px #f0c030;">{..}</div>
<div class="t" id="tw19" style="left:568px;top:536.0px;font-size:13px;color:#cfcfcf;font-weight:normal;transform:scaleX(0.9865);transform-origin:0 50%;">sitemap.json</div>
<div class="a" style="left:512px;top:955px;width:199px;height:17px;background:#383838;"></div>
<svg class="a" style="left:520px;top:960px;" width="5" height="8" viewBox="0 0 5 8"><path d="M0 0L5 4L0 8Z" fill="#8ab4dc"/></svg>
<div class="t" style="left:532px;top:959.5px;font-size:11px;color:#cfcfcf;font-weight:bold;">大纲</div>
<div class="a" style="left:512px;top:972px;width:200px;height:27px;background:#363636;"></div>
<svg class="a" style="left:528px;top:979px;" width="13" height="13" viewBox="0 0 13 13"><circle cx="6.5" cy="6.5" r="5.8" fill="none" stroke="#aaa" stroke-width="1"/><path d="M4 4L9 9M9 4L4 9" stroke="#aaa" stroke-width="1"/></svg>
<div class="t" style="left:544px;top:980.0px;font-size:12px;color:#aaa;font-weight:normal;">0</div>
<svg class="a" style="left:555px;top:979px;" width="13" height="12" viewBox="0 0 13 12"><path d="M7 1L13 12H1Z" fill="none" stroke="#aaa" stroke-width="1.1"/><path d="M7 5V9M7 10V11" stroke="#aaa" stroke-width="1"/></svg>
<div class="t" style="left:570px;top:980.0px;font-size:12px;color:#aaa;font-weight:normal;">1</div>
<div class="a" style="left:712px;top:92px;width:537px;height:30px;background:#363636;"></div>
<div class="a" style="left:712px;top:122px;width:537px;height:548px;background:#2d2d2d;"></div>
<div class="a" style="left:712px;top:92px;width:115px;height:30px;background:#2d2d2d;"></div>
<div class="t" style="left:721px;top:101.2px;font-size:11.5px;color:#e8b820;font-weight:normal;">{..}</div>
<div class="t" id="tw20" style="left:743.5px;top:101.0px;font-size:13px;color:#f5f5f5;font-weight:normal;transform:scaleX(0.9968);transform-origin:0 50%;">app.json</div>
<svg class="a" style="left:809px;top:101px;" width="11" height="11" viewBox="0 0 11 11"><path d="M1 1L10 10M10 1L1 10" stroke="#eee" stroke-width="1.4"/></svg>
<svg class="a" style="left:1151px;top:99px;" width="17" height="16" viewBox="0 0 17 16"><path d="M7 2H12L15 5V15H6V8" fill="none" stroke="#ddd" stroke-width="1.2"/><path d="M11.5 2V5.5H15" fill="none" stroke="#ddd" stroke-width="1"/><path d="M2 8 A3 3 0 0 1 5 4H8M6.5 2.5L8 4L6.5 5.5" fill="none" stroke="#ddd" stroke-width="1.1"/></svg>
<svg class="a" style="left:1184px;top:100px;" width="14" height="13" viewBox="0 0 14 13"><rect x="0.6" y="0.6" width="12.8" height="11.8" fill="none" stroke="#ddd" stroke-width="1.2"/><path d="M7 0.6V12.4" stroke="#ddd" stroke-width="1.2"/></svg>
<div class="a" style="left:1216px;top:106px;width:2px;height:2px;background:#ddd;"></div>
<div class="a" style="left:1222px;top:106px;width:2px;height:2px;background:#ddd;"></div>
<div class="a" style="left:1228px;top:106px;width:2px;height:2px;background:#ddd;"></div>
<svg class="a" style="left:719px;top:127px;" width="17" height="12" viewBox="0 0 17 12"><path d="M0 1.5H2M4 1.5H16M0 4.5H2M4 4.5H16M0 7.5H2M4 7.5H16M0 10.5H2M4 10.5H16" stroke="#aaa" stroke-width="1"/></svg>
<svg class="a" style="left:751px;top:126px;" width="12" height="14" viewBox="0 0 12 14"><path d="M1 1H11V13L6 9L1 13Z" fill="none" stroke="#aaa" stroke-width="1.2"/></svg>
<svg class="a" style="left:780px;top:127px;" width="14" height="12" viewBox="0 0 14 12"><path d="M13 6H1.5M6 1.5L1.5 6L6 10.5" fill="none" stroke="#aaa" stroke-width="1.2"/></svg>
<svg class="a" style="left:809px;top:127px;" width="14" height="12" viewBox="0 0 14 12"><path d="M1 6H12.5M8 1.5L12.5 6L8 10.5" fill="none" stroke="#555" stroke-width="1.2"/></svg>
<div class="t" style="left:837px;top:127.2px;font-size:11.5px;color:#e8b820;font-weight:normal;">{..}</div>
<div class="t" id="tw21" style="left:858.5px;top:127.0px;font-size:13px;color:#a8a8a8;font-weight:normal;transform:scaleX(1.0070);transform-origin:0 50%;">app.json</div>
<svg class="a" style="left:911px;top:128px;" width="6" height="10" viewBox="0 0 6 10"><path d="M1 1L5 5L1 9" fill="none" stroke="#aaa" stroke-width="1.1"/></svg>
<div class="t" style="left:923px;top:127.0px;font-size:13px;color:#a8a8a8;font-weight:normal;">[&nbsp;&nbsp;]</div>
<div class="t" id="tw22" style="left:944.5px;top:127.0px;font-size:13px;color:#a8a8a8;font-weight:normal;transform:scaleX(0.9544);transform-origin:0 50%;">subPackages</div>
<svg class="a" style="left:1024px;top:128px;" width="6" height="10" viewBox="0 0 6 10"><path d="M1 1L5 5L1 9" fill="none" stroke="#aaa" stroke-width="1.1"/></svg>
<div class="t" style="left:1036px;top:127.0px;font-size:13px;color:#a8a8a8;font-weight:normal;">{ }</div>
<div class="t" style="left:1058px;top:127.0px;font-size:13px;color:#a8a8a8;font-weight:normal;">0</div>
<svg class="a" style="left:1069px;top:128px;" width="6" height="10" viewBox="0 0 6 10"><path d="M1 1L5 5L1 9" fill="none" stroke="#aaa" stroke-width="1.1"/></svg>
<div class="t" style="left:1082px;top:127.0px;font-size:13px;color:#a8a8a8;font-weight:normal;">{ }</div>
<div class="t" id="tw23" style="left:1101.5px;top:127.0px;font-size:13px;color:#a8a8a8;font-weight:normal;transform:scaleX(1.0436);transform-origin:0 50%;">plugins</div>
<div class="a" style="left:1235px;top:144px;width:1px;height:526px;background:#454545;"></div>
<div class="a" style="left:1245px;top:144px;width:4px;height:6px;background:#d4a800;"></div>
<div class="a" style="left:1236px;top:378px;width:13px;height:3px;background:#9a9a9a;"></div>
<div class="a" style="left:712px;top:144px;width:523px;height:526px;overflow:hidden">
<div class="a" style="left:52px;top:32px;width:1px;height:500px;background:#505050;"></div>
<div class="a" style="left:69px;top:64px;width:1px;height:500px;background:#505050;"></div>
<div class="t m" style="left:-12px;width:38px;text-align:right;top:9.5px;font-size:14px;color:#5a5a5a">1</div>
<div class="t m" style="left:51.00px;top:10.1px;font-size:14.75px;-webkit-text-stroke:0.2px currentColor"><span style="color:#69b4f0">{</span></div>
<div class="t m" style="left:-12px;width:38px;text-align:right;top:41.5px;font-size:14px;color:#5a5a5a">2</div>
<div class="t m" style="left:68.70px;top:42.1px;font-size:14.75px;-webkit-text-stroke:0.2px currentColor"><span style="color:#9ccff5">"</span><span style="color:#dcdcdc">pages</span><span style="color:#9ccff5">"</span><span style="color:#9ccff5">: </span><span style="color:#69b4f0">[</span></div>
<div class="t m" style="left:-12px;width:38px;text-align:right;top:73.5px;font-size:14px;color:#5a5a5a">3</div>
<div class="t m" style="left:86.40px;top:74.1px;font-size:14.75px;-webkit-text-stroke:0.2px currentColor"><span style="color:#9ccff5">"</span><span style="color:#f4826c">pages/index/index</span><span style="color:#9ccff5">"</span><span style="color:#9ccff5">,</span></div>
<div class="t m" style="left:-12px;width:38px;text-align:right;top:105.5px;font-size:14px;color:#5a5a5a">4</div>
<div class="t m" style="left:86.40px;top:106.1px;font-size:14.75px;-webkit-text-stroke:0.2px currentColor"><span style="color:#9ccff5">"</span><span style="color:#f4826c">pages/index/weal</span><span style="color:#9ccff5">"</span><span style="color:#9ccff5">,</span></div>
<div class="t m" style="left:-12px;width:38px;text-align:right;top:137.5px;font-size:14px;color:#5a5a5a">5</div>
<div class="t m" style="left:86.40px;top:138.1px;font-size:14.75px;-webkit-text-stroke:0.2px currentColor"><span style="color:#9ccff5">"</span><span style="color:#f4826c">pages/index/me</span><span style="color:#9ccff5">"</span><span style="color:#9ccff5">,</span></div>
<div class="t m" style="left:-12px;width:38px;text-align:right;top:169.5px;font-size:14px;color:#5a5a5a">6</div>
<div class="t m" style="left:86.40px;top:170.1px;font-size:14.75px;-webkit-text-stroke:0.2px currentColor"><span style="color:#9ccff5">"</span><span style="color:#f4826c">pages/me/balance</span><span style="color:#9ccff5">"</span><span style="color:#9ccff5">,</span></div>
<div class="t m" style="left:-12px;width:38px;text-align:right;top:201.5px;font-size:14px;color:#5a5a5a">7</div>
<div class="t m" style="left:86.40px;top:202.1px;font-size:14.75px;-webkit-text-stroke:0.2px currentColor"><span style="color:#9ccff5">"</span><span style="color:#f4826c">pages/me/point</span><span style="color:#9ccff5">"</span><span style="color:#9ccff5">,</span></div>
<div class="t m" style="left:-12px;width:38px;text-align:right;top:233.5px;font-size:14px;color:#5a5a5a">8</div>
<div class="t m" style="left:86.40px;top:234.1px;font-size:14.75px;-webkit-text-stroke:0.2px currentColor"><span style="color:#9ccff5">"</span><span style="color:#f4826c">pages/me/rebate</span><span style="color:#9ccff5">"</span><span style="color:#9ccff5">,</span></div>
<div class="t m" style="left:-12px;width:38px;text-align:right;top:265.5px;font-size:14px;color:#5a5a5a">9</div>
<div class="t m" style="left:86.40px;top:266.1px;font-size:14.75px;-webkit-text-stroke:0.2px currentColor"><span style="color:#9ccff5">"</span><span style="color:#f4826c">pages/me/getmoney</span><span style="color:#9ccff5">"</span><span style="color:#9ccff5">,</span></div>
<div class="t m" style="left:-12px;width:38px;text-align:right;top:297.5px;font-size:14px;color:#5a5a5a">10</div>
<div class="t m" style="left:86.40px;top:298.1px;font-size:14.75px;-webkit-text-stroke:0.2px currentColor"><span style="color:#9ccff5">"</span><span style="color:#f4826c">pages/me/topup</span><span style="color:#9ccff5">"</span><span style="color:#9ccff5">,</span></div>
<div class="t m" style="left:-12px;width:38px;text-align:right;top:329.5px;font-size:14px;color:#5a5a5a">11</div>
<div class="t m" style="left:86.40px;top:330.1px;font-size:14.75px;-webkit-text-stroke:0.2px currentColor"><span style="color:#9ccff5">"</span><span style="color:#f4826c">pages/me/buyvip</span><span style="color:#9ccff5">"</span><span style="color:#9ccff5">,</span></div>
<div class="t m" style="left:-12px;width:38px;text-align:right;top:361.5px;font-size:14px;color:#5a5a5a">12</div>
<div class="t m" style="left:86.40px;top:362.1px;font-size:14.75px;-webkit-text-stroke:0.2px currentColor"><span style="color:#9ccff5">"</span><span style="color:#f4826c">pages/me/login</span><span style="color:#9ccff5">"</span><span style="color:#9ccff5">,</span></div>
<div class="t m" style="left:-12px;width:38px;text-align:right;top:393.5px;font-size:14px;color:#5a5a5a">13</div>
<div class="t m" style="left:86.40px;top:394.1px;font-size:14.75px;-webkit-text-stroke:0.2px currentColor"><span style="color:#9ccff5">"</span><span style="color:#f4826c">pages/me/pointlist</span><span style="color:#9ccff5">"</span><span style="color:#9ccff5">,</span></div>
<div class="t m" style="left:-12px;width:38px;text-align:right;top:425.5px;font-size:14px;color:#5a5a5a">14</div>
<div class="t m" style="left:86.40px;top:426.1px;font-size:14.75px;-webkit-text-stroke:0.2px currentColor"><span style="color:#9ccff5">"</span><span style="color:#f4826c">pages/jikuaidi/index</span><span style="color:#9ccff5">"</span><span style="color:#9ccff5">,</span></div>
<div class="t m" style="left:-12px;width:38px;text-align:right;top:457.5px;font-size:14px;color:#5a5a5a">15</div>
<div class="t m" style="left:86.40px;top:458.1px;font-size:14.75px;-webkit-text-stroke:0.2px currentColor"><span style="color:#9ccff5">"</span><span style="color:#f4826c">pages/jikuaidi/addaddress</span><span style="color:#9ccff5">"</span><span style="color:#9ccff5">,</span></div>
<div class="t m" style="left:-12px;width:38px;text-align:right;top:489.5px;font-size:14px;color:#5a5a5a">16</div>
<div class="t m" style="left:86.40px;top:490.1px;font-size:14.75px;-webkit-text-stroke:0.2px currentColor"><span style="color:#9ccff5">"</span><span style="color:#f4826c">pages/jikuaidi/addresslist</span><span style="color:#9ccff5">"</span><span style="color:#9ccff5">,</span></div>
<div class="t m" style="left:-12px;width:38px;text-align:right;top:521.5px;font-size:14px;color:#5a5a5a">17</div>
<div class="t m" style="left:86.40px;top:522.1px;font-size:14.75px;-webkit-text-stroke:0.2px currentColor"><span style="color:#9ccff5">"</span><span style="color:#f4826c">pages/jikuaidi/mark</span><span style="color:#9ccff5">"</span><span style="color:#9ccff5">,</span></div>
<svg class="a" style="left:33px;top:6px;" width="11" height="6" viewBox="0 0 11 6"><path d="M0.5 0.5L5.5 5L10.5 0.5" fill="none" stroke="#c5c5c5" stroke-width="1.1"/></svg>
<svg class="a" style="left:33px;top:38px;" width="11" height="6" viewBox="0 0 11 6"><path d="M0.5 0.5L5.5 5L10.5 0.5" fill="none" stroke="#c5c5c5" stroke-width="1.1"/></svg>
<svg class="a" style="left:52px;top:28px;" width="10" height="4" viewBox="0 0 10 4"><path d="M0.5 3Q2.5 0 4.5 2Q6.5 4 9 1" fill="none" stroke="#d7ba00" stroke-width="1.1"/></svg>
</div>
<div class="a" style="left:712px;top:670px;width:537px;height:30px;background:#333333;"></div>
<div class="a" style="left:712px;top:669px;width:537px;height:1px;background:#3f3f3f;"></div>
<div class="t" style="left:731px;top:680.0px;font-size:12px;color:#a8a8a8;font-weight:normal;">构建</div>
<div class="t" style="left:774px;top:680.0px;font-size:12px;color:#f0f0f0;font-weight:normal;">调试器</div>
<div class="a" style="left:774px;top:698px;width:33px;height:2px;background:#e8e8e8;"></div>
<div class="a" style="left:815px;top:677px;width:33px;height:18px;background:#d03c3c;border-radius:9px"></div>
<div class="t" style="left:681.5px;width:300px;text-align:center;top:680.5px;font-size:12px;color:#fff;font-weight:normal;">2, 18</div>
<div class="t" style="left:868px;top:680.0px;font-size:12px;color:#a8a8a8;font-weight:normal;">问题</div>
<div class="a" style="left:898px;top:677px;width:18px;height:18px;background:#4a4a4a;border-radius:9px"></div>
<div class="t" style="left:757px;width:300px;text-align:center;top:680.5px;font-size:12px;color:#eee;font-weight:normal;">1</div>
<div class="t" style="left:935px;top:680.0px;font-size:12px;color:#a8a8a8;font-weight:normal;">输出</div>
<div class="t" style="left:977px;top:680.0px;font-size:12px;color:#a8a8a8;font-weight:normal;">终端</div>
<div class="t" style="left:1019px;top:680.0px;font-size:12px;color:#a8a8a8;font-weight:normal;">代码质量</div>
<svg class="a" style="left:1185px;top:683px;" width="11" height="6" viewBox="0 0 11 6"><path d="M0.5 5.5L5.5 0.8L10.5 5.5" fill="none" stroke="#ddd" stroke-width="1.2"/></svg>
<svg class="a" style="left:1217px;top:683px;" width="11" height="11" viewBox="0 0 11 11"><path d="M1 1L10 10M10 1L1 10" stroke="#ddd" stroke-width="1.3"/></svg>
<div class="a" style="left:712px;top:700px;width:537px;height:26px;background:#292a2d;"></div>
<svg class="a" style="left:721px;top:705px;" width="16" height="16" viewBox="0 0 16 16"><path d="M6 13H1.5V1.5H13V6" fill="none" stroke="#9aa0a6" stroke-width="1.1"/><path d="M7 7L15 10L11.5 11.5L14.5 14.5L13.5 15.5L10.5 12.5L9 16Z" fill="#9aa0a6"/></svg>
<div class="a" style="left:746px;top:705px;width:1px;height:16px;background:#4a4a4a;"></div>
<div class="a" style="left:753px;top:700px;width:54px;height:26px;background:#000;"></div>
<div class="t" id="tw24" style="left:764.5px;top:707.0px;font-size:13px;color:#f0f0f0;font-weight:normal;transform:scaleX(0.9385);transform-origin:0 50%;">Wxml</div>
<div class="t" id="tw25" style="left:818px;top:707.0px;font-size:13px;color:#dcdcdc;font-weight:normal;transform:scaleX(0.9119);transform-origin:0 50%;">Console</div>
<div class="t" id="tw26" style="left:884px;top:707.0px;font-size:13px;color:#dcdcdc;font-weight:normal;transform:scaleX(0.8909);transform-origin:0 50%;">Sources</div>
<div class="t" id="tw27" style="left:949px;top:707.0px;font-size:13px;color:#dcdcdc;font-weight:normal;transform:scaleX(0.9751);transform-origin:0 50%;">Network</div>
<svg class="a" style="left:1015px;top:708px;" width="10" height="10" viewBox="0 0 10 10"><path d="M1 1L4.5 5L1 9M5.5 1L9 5L5.5 9" fill="none" stroke="#bbb" stroke-width="1.1"/></svg>
<div class="a" style="left:1068px;top:707px;width:12px;height:12px;border-radius:50%;background:#e8404a"></div>
<svg class="a" style="left:1068px;top:707px;" width="12" height="12" viewBox="0 0 12 12"><path d="M4 4L8 8M8 4L4 8" stroke="#fff" stroke-width="1.4"/></svg>
<div class="t" style="left:1082px;top:707.0px;font-size:13px;color:#e0e0e0;font-weight:normal;">2</div>
<svg class="a" style="left:1093px;top:707px;" width="12" height="11" viewBox="0 0 12 11"><path d="M6 0.5L11.5 10.5H0.5Z" fill="#f5b800"/><path d="M6 4V7.5M6 8.5V9.5" stroke="#292a2d" stroke-width="1.2"/></svg>
<div class="t" style="left:1109px;top:707.0px;font-size:13px;color:#e0e0e0;font-weight:normal;">18</div>
<svg class="a" style="left:1125px;top:707px;" width="11" height="12" viewBox="0 0 11 12"><path d="M1 1H10V8H4L1 11Z" fill="#2f7ef5"/><path d="M3 4H8M3 6H6" stroke="#fff" stroke-width=".8"/></svg>
<div class="t" style="left:1139px;top:707.0px;font-size:13px;color:#e0e0e0;font-weight:normal;">23</div>
<div class="a" style="left:1158px;top:705px;width:1px;height:16px;background:#444;"></div>
<svg class="a" style="left:1170px;top:706px;" width="15" height="15" viewBox="0 0 15 15"><circle cx="7.5" cy="7.5" r="4.8" fill="none" stroke="#8a8a8a" stroke-width="3.2" stroke-dasharray="2.2 1.55"/><circle cx="7.5" cy="7.5" r="4" fill="#8a8a8a"/><circle cx="7.5" cy="7.5" r="2" fill="#292a2d"/></svg>
<div class="a" style="left:1204px;top:707px;width:3px;height:3px;background:#8a8a8a;border-radius:50%"></div>
<div class="a" style="left:1204px;top:712px;width:3px;height:3px;background:#8a8a8a;border-radius:50%"></div>
<div class="a" style="left:1204px;top:717px;width:3px;height:3px;background:#8a8a8a;border-radius:50%"></div>
<svg class="a" style="left:1224px;top:705px;" width="18" height="15" viewBox="0 0 18 15"><rect x="5" y="1" width="12" height="9" fill="none" stroke="#777" stroke-width="1.6"/><path d="M1 5V14H13" fill="none" stroke="#777" stroke-width="1.6"/></svg>
<div class="a" style="left:712px;top:726px;width:537px;height:1px;background:#454545;"></div>
<div class="a" style="left:712px;top:727px;width:537px;height:5px;background:#242424;"></div>
<div class="a" style="left:712px;top:727px;width:537px;height:5px;overflow:hidden"><div class="t m" style="left:15.5px;top:-5px;font-size:9.6px;color:#4a9ae8">&lt;page&gt;</div></div>
<div class="a" style="left:712px;top:732px;width:537px;height:1px;background:#4a4a4a;"></div>
<div class="a" style="left:1235px;top:727px;width:14px;height:5px;background:#3a3a3a;border-radius:2px"></div>
<div class="a" style="left:712px;top:733px;width:537px;height:22px;background:#242424;"></div>
<div class="a" style="left:712px;top:755px;width:537px;height:1px;background:#4a4a4a;"></div>
<div class="a" style="left:712px;top:756px;width:537px;height:26px;background:#292a2d;"></div>
<div class="a" style="left:712px;top:756px;width:50px;height:26px;background:#000;"></div>
<div class="t" id="tw28" style="left:721px;top:763.0px;font-size:13px;color:#f0f0f0;font-weight:normal;transform:scaleX(0.8897);transform-origin:0 50%;">Styles</div>
<div class="t" id="tw29" style="left:771px;top:763.0px;font-size:13px;color:#dcdcdc;font-weight:normal;transform:scaleX(0.9419);transform-origin:0 50%;">Computed</div>
<div class="t" id="tw30" style="left:847px;top:763.0px;font-size:13px;color:#dcdcdc;font-weight:normal;transform:scaleX(0.9261);transform-origin:0 50%;">Dataset</div>
<div class="t" id="tw31" style="left:906.5px;top:763.0px;font-size:13px;color:#dcdcdc;font-weight:normal;transform:scaleX(0.9361);transform-origin:0 50%;">Component Data</div>
<div class="a" style="left:712px;top:782px;width:537px;height:1px;background:#4a4a4a;"></div>
<div class="a" style="left:712px;top:783px;width:537px;height:26px;background:#292a2d;"></div>
<div class="a" style="left:715px;top:786px;width:463px;height:20px;background:#232323;"></div>
<div class="t" id="tw32" style="left:718.5px;top:790.0px;font-size:13px;color:#8a8a8a;font-weight:normal;transform:scaleX(0.9519);transform-origin:0 50%;">Filter</div>
<div class="t" id="tw33" style="left:1188.5px;top:790.5px;font-size:12px;color:#eee;font-weight:bold;font-family:'Liberation Mono',monospace;transform:scaleX(0.8850);transform-origin:0 50%;">.cls</div>
<svg class="a" style="left:1228px;top:791px;" width="11" height="11" viewBox="0 0 11 11"><path d="M5.5 0V11M0 5.5H11" stroke="#555" stroke-width="1.5"/></svg>
<svg class="a" style="left:1239px;top:801px;" width="5" height="5" viewBox="0 0 5 5"><path d="M5 0V5H0Z" fill="#777"/></svg>
<div class="a" style="left:712px;top:809px;width:537px;height:163px;background:#252525;"></div>
<div class="a" style="left:712px;top:972px;width:537px;height:27px;background:#363636;"></div>
<div class="t" style="left:976px;top:980.0px;font-size:12px;color:#b5b5b5;font-weight:normal;">行</div>
<div class="t" style="left:991px;top:980.0px;font-size:12px;color:#b5b5b5;font-weight:normal;">49，</div>
<div class="t" id="tw34" style="left:1016px;top:980.0px;font-size:12px;color:#b5b5b5;font-weight:normal;transform:scaleX(1.0220);transform-origin:0 50%;">列 9</div>
<div class="t" id="tw35" style="left:1054.5px;top:980.0px;font-size:12px;color:#b5b5b5;font-weight:normal;transform:scaleX(0.9774);transform-origin:0 50%;">空格: 2</div>
<div class="t" id="tw36" style="left:1106.5px;top:980.0px;font-size:12px;color:#b5b5b5;font-weight:normal;transform:scaleX(0.9412);transform-origin:0 50%;">UTF-8</div>
<div class="t" id="tw37" style="left:1154.5px;top:980.0px;font-size:12px;color:#b5b5b5;font-weight:normal;transform:scaleX(0.8562);transform-origin:0 50%;">LF</div>
<div class="t" id="tw38" style="left:1181.5px;top:980.0px;font-size:12px;color:#b5b5b5;font-weight:normal;transform:scaleX(0.9058);transform-origin:0 50%;">JSON</div>
<svg class="a" style="left:1224px;top:978px;" width="14" height="13" viewBox="0 0 14 13"><path d="M7 1L13 12H1Z" fill="none" stroke="#bbb" stroke-width="1.1"/><path d="M7 5V9M7 10V11" stroke="#bbb" stroke-width="1"/></svg>
<div class="a" style="left:1249px;top:0px;width:1px;height:1000px;background:#8fb0cc;"></div>
</body></html>
